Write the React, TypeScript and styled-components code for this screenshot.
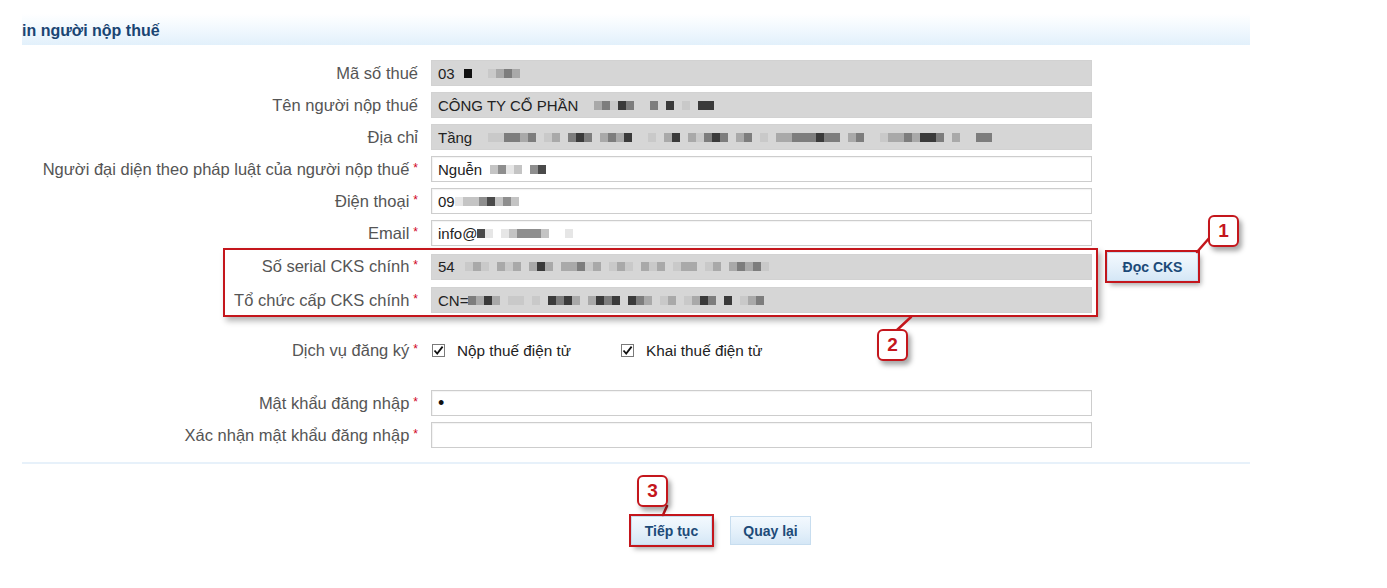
import styled, { createGlobalStyle, css } from "styled-components";

const GlobalStyle = createGlobalStyle`
  html, body {
    margin: 0;
    padding: 0;
    background: #ffffff;
  }
  body {
    font-family: "Liberation Sans", Arial, sans-serif;
  }
`;

const RED = "#c4161c";

const Page = styled.div`
  position: relative;
  width: 1387px;
  height: 588px;
  box-sizing: border-box;
  padding: 14px 0 0 22px;
`;

const Section = styled.div`
  width: 1228px;
`;

const TitleBar = styled.div`
  height: 31px;
  display: flex;
  align-items: center;
  padding-top: 2px;
  box-sizing: border-box;
  background: linear-gradient(to bottom, #ffffff 0%, #f2f9fe 45%, #e2f0fb 100%);
`;

const Title = styled.h2`
  margin: 0;
  font-size: 16px;
  font-weight: 700;
  color: #1a4573;
`;

const Form = styled.div`
  margin-top: 15px;
  display: flex;
  flex-direction: column;
  gap: 6px;
`;

const Row = styled.div<{ $space?: number }>`
  display: flex;
  align-items: center;
  gap: 13px;
  margin-top: ${(p) => p.$space ?? 0}px;
`;

const Label = styled.label`
  width: 396px;
  flex-shrink: 0;
  text-align: right;
  font-size: 16.5px;
  color: #555555;
  white-space: nowrap;
`;

const Req = styled.span`
  color: #d0021b;
  font-size: 12px;
  margin-left: 4px;
  vertical-align: 3px;
`;

const Field = styled.div<{ $readonly?: boolean }>`
  width: 661px;
  height: 26px;
  box-sizing: border-box;
  display: flex;
  align-items: center;
  padding: 0 6px;
  font-size: 15px;
  color: #222;
  white-space: nowrap;
  overflow: hidden;
  ${(p) =>
    p.$readonly
      ? css`
          background: #d6d6d6;
          border: 1px solid #d2d2d2;
        `
      : css`
          background: #ffffff;
          border: 1px solid #cdcdcd;
          box-shadow: inset 1px 1px 1px rgba(0, 0, 0, 0.05);
        `}
`;

const Button = styled.button<{ $marked?: boolean; $w: number }>`
  width: ${(p) => p.$w}px;
  height: 29px;
  flex-shrink: 0;
  box-sizing: border-box;
  border: 1px solid #c7ddef;
  background: linear-gradient(to bottom, #f3f9fe 0%, #e4f0fa 55%, #d5e7f6 100%);
  font-family: "Liberation Sans", Arial, sans-serif;
  font-size: 14px;
  font-weight: 700;
  color: #1c4a78;
  padding: 0;
  cursor: pointer;
  ${(p) =>
    p.$marked &&
    css`
      outline: 2px solid ${RED};
      outline-offset: 0;
      box-shadow: 3px 4px 5px rgba(0, 0, 0, 0.35);
    `}
`;

const SideButton = styled(Button)`
  margin-left: 2px;
`;

const ChecksRow = styled.div`
  display: flex;
  align-items: center;
  gap: 50px;
  padding-left: 1px;
`;

const CheckItem = styled.label`
  display: flex;
  align-items: center;
  gap: 12px;
  font-size: 15.3px;
  color: #222;
`;

const Box = styled.span`
  width: 13px;
  height: 13px;
  box-sizing: border-box;
  border: 1px solid #7a7a7a;
  background: #fff;
  display: flex;
  align-items: center;
  justify-content: center;
`;

const Dot = styled.span`
  font-size: 18px;
  line-height: 1;
  color: #111;
`;

const Divider = styled.div`
  margin-top: 14px;
  height: 2px;
  background: #e7f1fa;
`;

const ButtonBar = styled.div`
  margin-top: 52px;
  padding-left: 609px;
  display: flex;
  gap: 18px;
`;

const Pixels = styled.span<{ $gap: number }>`
  display: inline-flex;
  align-items: center;
  margin-left: ${(p) => p.$gap}px;
  height: 10px;
`;

const Pixel = styled.span<{ $c: string }>`
  width: 8px;
  height: 9px;
  background: ${(p) => p.$c};
`;

const Highlight = styled.div`
  position: absolute;
  left: 223px;
  top: 248px;
  width: 875px;
  height: 69px;
  box-sizing: border-box;
  border: 2px solid ${RED};
  box-shadow: 3px 4px 6px rgba(0, 0, 0, 0.3);
  pointer-events: none;
`;

const Callout = styled.div<{ $x: number; $y: number }>`
  position: absolute;
  left: ${(p) => p.$x}px;
  top: ${(p) => p.$y}px;
  width: 31px;
  height: 32px;
  box-sizing: border-box;
  border: 2px solid ${RED};
  border-radius: 6px;
  background: #fff;
  box-shadow: 3px 4px 5px rgba(0, 0, 0, 0.35);
  display: flex;
  align-items: center;
  justify-content: center;
  font-size: 19px;
  font-weight: 700;
  color: ${RED};
`;

const Pointers = styled.svg`
  position: absolute;
  left: 0;
  top: 0;
  pointer-events: none;
`;

// pixelated, redacted parts of the values: one char = one 8px cell
const shades: Record<string, string> = {
  a: "#c9c9c9",
  b: "#a9a9a9",
  c: "#7d7d7d",
  d: "#3a3a3a",
  e: "#111111",
};

const lightShades: Record<string, string> = {
  a: "#e6e6e6",
  b: "#c4c4c4",
  c: "#8e8e8e",
  d: "#4a4a4a",
  e: "#141414",
};

function Blur({ p, gap = 8, light }: { p: string; gap?: number; light?: boolean }) {
  const map = light ? lightShades : shades;
  return (
    <Pixels $gap={gap}>
      {p.split("").map((ch, i) => (
        <Pixel key={i} $c={map[ch] ?? "transparent"} />
      ))}
    </Pixels>
  );
}

function Check() {
  return (
    <Box>
      <svg width="11" height="11" viewBox="0 0 11 11">
        <path d="M1.5 5.5 L4.2 8.5 L9.6 1.6" fill="none" stroke="#111" strokeWidth="1.8" />
      </svg>
    </Box>
  );
}

export default function App() {
  return (
    <>
      <GlobalStyle />
      <Page>
        <Section>
          <TitleBar>
            <Title>in người nộp thuế</Title>
          </TitleBar>

          <Form>
            <Row>
              <Label>Mã số thuế</Label>
              <Field $readonly>
                03<Blur gap={9} p="e  abcb" />
              </Field>
            </Row>
            <Row>
              <Label>Tên người nộp thuế</Label>
              <Field $readonly>
                CÔNG TY CỔ PHẦN<Blur gap={16} p="bcadc  c d a dd" />
              </Field>
            </Row>
            <Row>
              <Label>Địa chỉ</Label>
              <Field $readonly>
                Tầng<Blur gap={8} p=" aaccbc ab cdc bcbd  a bd bacdc bc a bbcccdcc bc  abbcbddc b  cc" />
              </Field>
            </Row>
            <Row>
              <Label>
                Người đại diện theo pháp luật của người nộp thuế<Req>*</Req>
              </Label>
              <Field>
                Nguễn<Blur light gap={8} p="bcab cd" />
              </Field>
            </Row>
            <Row>
              <Label>
                Điện thoại<Req>*</Req>
              </Label>
              <Field>
                09<Blur light gap={0} p="abbcdbcb" />
              </Field>
            </Row>
            <Row>
              <Label>
                Email<Req>*</Req>
              </Label>
              <Field>
                info@<Blur light gap={0} p="da abcccb  a" />
              </Field>
            </Row>
            <Row>
              <Label>
                Số serial CKS chính<Req>*</Req>
              </Label>
              <Field $readonly>
                54<Blur gap={10} p="aba bab bdb bbcab aba bab abb ab bcbca" />
              </Field>
              <SideButton $w={91} $marked>
                Đọc CKS
              </SideButton>
            </Row>
            <Row>
              <Label>
                Tổ chức cấp CKS chính<Req>*</Req>
              </Label>
              <Field $readonly>
                CN=<Blur gap={0} p="cbdb aa a dcdb bdcd dcb ab abdc d abc" />
              </Field>
            </Row>

            <Row $space={22}>
              <Label>
                Dịch vụ đăng ký<Req>*</Req>
              </Label>
              <ChecksRow>
                <CheckItem>
                  <Check />
                  Nộp thuế điện tử
                </CheckItem>
                <CheckItem>
                  <Check />
                  Khai thuế điện tử
                </CheckItem>
              </ChecksRow>
            </Row>

            <Row $space={24}>
              <Label>
                Mật khẩu đăng nhập<Req>*</Req>
              </Label>
              <Field>
                <Dot>•</Dot>
              </Field>
            </Row>
            <Row>
              <Label>
                Xác nhận mật khẩu đăng nhập<Req>*</Req>
              </Label>
              <Field />
            </Row>
          </Form>

          <Divider />

          <ButtonBar>
            <Button $w={81} $marked>
              Tiếp tục
            </Button>
            <Button $w={81}>Quay lại</Button>
          </ButtonBar>
        </Section>

        <Highlight />

        <Pointers width="1387" height="588">
          <g stroke={RED} strokeWidth="2.5" strokeLinecap="round">
            <line x1="1211" y1="236" x2="1197" y2="252" />
            <line x1="897" y1="330" x2="911" y2="317" />
            <line x1="667" y1="506" x2="663" y2="515" />
          </g>
        </Pointers>

        <Callout $x={1208} $y={215}>1</Callout>
        <Callout $x={877} $y={329}>2</Callout>
        <Callout $x={637} $y={475}>3</Callout>
      </Page>
    </>
  );
}
